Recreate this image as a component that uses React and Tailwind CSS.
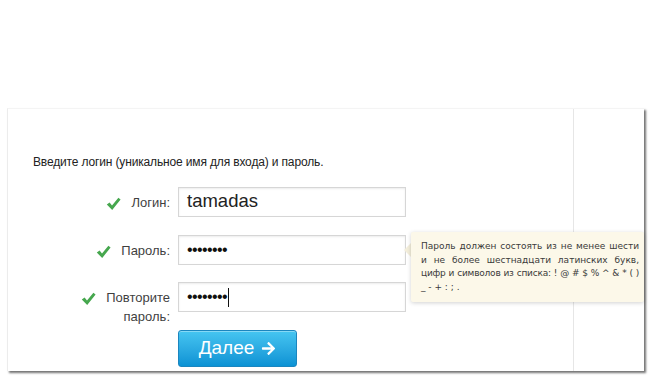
import { FaArrowRight } from "react-icons/fa";

const Check = () => (
  <svg width="15" height="14" viewBox="0 0 15 14" className="shrink-0">
    <path d="M0.8 7.6 L3.6 5.4 L6 8.6 L12.4 0.8 L14.6 2.6 L6.2 13 Z" fill="#46a74e" />
  </svg>
);

function Row({ label, second, h, children }) {
  return (
    <div className="flex items-start" style={{ height: h }}>
      <div className="w-[145px] flex justify-end pt-[6px] pr-[8px]">
        <div className="flex items-start gap-[10px]">
          <div className="pt-[4px]">
            <Check />
          </div>
          <div className="text-right text-[13px] leading-[19px] text-[#3f3f3f]">
            <div>{label}</div>
            {second && <div>{second}</div>}
          </div>
        </div>
      </div>
      {children}
    </div>
  );
}

const Input = ({ children }) => (
  <div className="w-[228px] h-[30px] border border-[#d6d6d6] shadow-[inset_0_1px_2px_rgba(0,0,0,0.08)] bg-white flex items-center pl-[8px]">
    {children}
  </div>
);

export default function App() {
  return (
    <div className="w-[650px] h-[378px] bg-white overflow-hidden font-[family-name:Liberation_Sans,Arial,sans-serif] pt-[108px]">
      <div className="relative ml-[7px] w-[637px] h-[263px] border-l border-[#ececec] border-t border-t-[#f4f4f4] shadow-[2px_2px_2px_rgba(0,0,0,0.55)] flex">
        {/* main column */}
        <div className="w-[566px] border-r border-[#e6e6e6] pl-[25px] pt-[46px]">
          <p className="text-[12px] leading-[14px] text-[#222] tracking-[-0.15px]">
            Введите логин (уникальное имя для входа) и пароль.
          </p>
          <div className="mt-[18px]">
            <Row label="Логин:" h={48}>
              <Input>
                <span className="text-[18.5px] text-[#222] leading-none pb-[1px]">tamadas</span>
              </Input>
            </Row>
            <Row label="Пароль:" h={47}>
              <Input>
                <span className="text-[16px] text-[#111] tracking-[-0.6px] leading-none">••••••••</span>
              </Input>
            </Row>
            <Row label="Повторите" second="пароль:" h={48}>
              <Input>
                <span className="text-[16px] text-[#111] tracking-[-0.6px] leading-none">••••••••</span>
                <span className="w-px h-[19px] bg-[#111] ml-[1px]" />
              </Input>
            </Row>
            <div className="pl-[145px]">
              <button className="w-[119px] h-[37px] rounded-[3px] border border-[#1b86bf] bg-gradient-to-b from-[#45c6f1] to-[#0a92d4] flex items-center justify-center gap-[7px] text-white text-[19px] shadow-[inset_0_1px_0_rgba(255,255,255,0.35)]">
                <span>Далее</span>
                <FaArrowRight className="w-[15px] h-[15px]" />
              </button>
            </div>
          </div>
        </div>
        <div className="flex-1" />

        {/* tooltip */}
        <div className="absolute left-[396px] top-[123px] w-[240px] h-[70px]">
          <div className="absolute left-0 top-[10px] w-0 h-0 border-y-[8px] border-y-transparent border-r-[8px] border-r-[#f3eedb]" />
          <div className="absolute left-[7px] top-0 right-0 bottom-0 bg-[#fcf8e9] shadow-[0_1px_4px_rgba(0,0,0,0.18)] rounded-[2px] pl-[10px] pr-[5px] pt-[8px] text-[9px] leading-[13.5px] text-[#3a3a3a] font-[family-name:DejaVu_Sans,Verdana,sans-serif]">
            <div className="text-justify [text-align-last:justify] whitespace-nowrap">Пароль должен состоять из не менее шести</div>
            <div className="text-justify [text-align-last:justify]">и не более шестнадцати латинских букв,</div>
            <div className="text-justify [text-align-last:justify] whitespace-nowrap tracking-[-0.2px] [word-spacing:-1px]">цифр и символов из списка: ! @ # $ % ^ &amp; * ( )</div>
            <div>_ - + : ; .</div>
          </div>
        </div>
      </div>
    </div>
  );
}
